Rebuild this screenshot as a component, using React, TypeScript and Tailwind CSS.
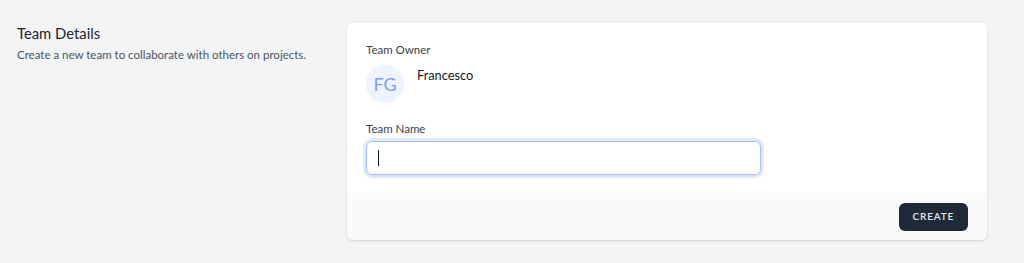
export default function App() {
    return (
        <div className="w-[1024px] h-[263px] bg-[#f3f4f6] font-['Lato',sans-serif] overflow-hidden">
            <div className="flex pt-[23px]">
                {/* Section title */}
                <div className="w-[347px] pl-[17px]">
                    <h3 className="text-[14.8px] leading-[20px] font-normal text-[#1f2330]">Team Details</h3>
                    <p className="mt-[4px] text-[11.5px] leading-[16px] text-[#4b5563]">
                        Create a new team to collaborate with others on projects.
                    </p>
                </div>

                {/* Form card */}
                <div className="w-[640px] rounded-md bg-white shadow-[0_1px_3px_rgba(0,0,0,0.1),0_1px_2px_rgba(0,0,0,0.06)] overflow-hidden">
                    <div className="px-[19px] pt-[19px] pb-[18px]">
                        <div className="text-[11.5px] leading-[16px] text-[#374151]">Team Owner</div>
                        <div className="mt-[7px] flex items-start">
                            <div className="w-[38px] h-[38px] rounded-full bg-[#ebf4ff] flex items-center justify-center text-[18px] text-[#7f9cf5]">
                                FG
                            </div>
                            <div className="ml-[13px] mt-[1px] text-[12.8px] leading-[18px] text-[#111827]">Francesco</div>
                        </div>

                        <div className="mt-[18px] text-[11.5px] leading-[16px] text-[#374151]">Team Name</div>
                        <div className="mt-[4px] w-[395px] h-[34px] rounded-md border border-[#a3bffa] ring-[3px] ring-[#c3dafe]/50 shadow-sm flex items-center pl-[11px]">
                            <div className="w-px h-[16px] bg-[#111827]" />
                        </div>
                    </div>

                    <div className="bg-[#f9fafb] h-[47px] flex items-center justify-end pr-[19px]">
                        <button className="h-[28px] px-[14px] rounded-md bg-[#1f2937] text-[#e5e7eb] text-[10px] font-semibold uppercase tracking-[0.08em]">
                            Create
                        </button>
                    </div>
                </div>
            </div>
        </div>
    );
}
